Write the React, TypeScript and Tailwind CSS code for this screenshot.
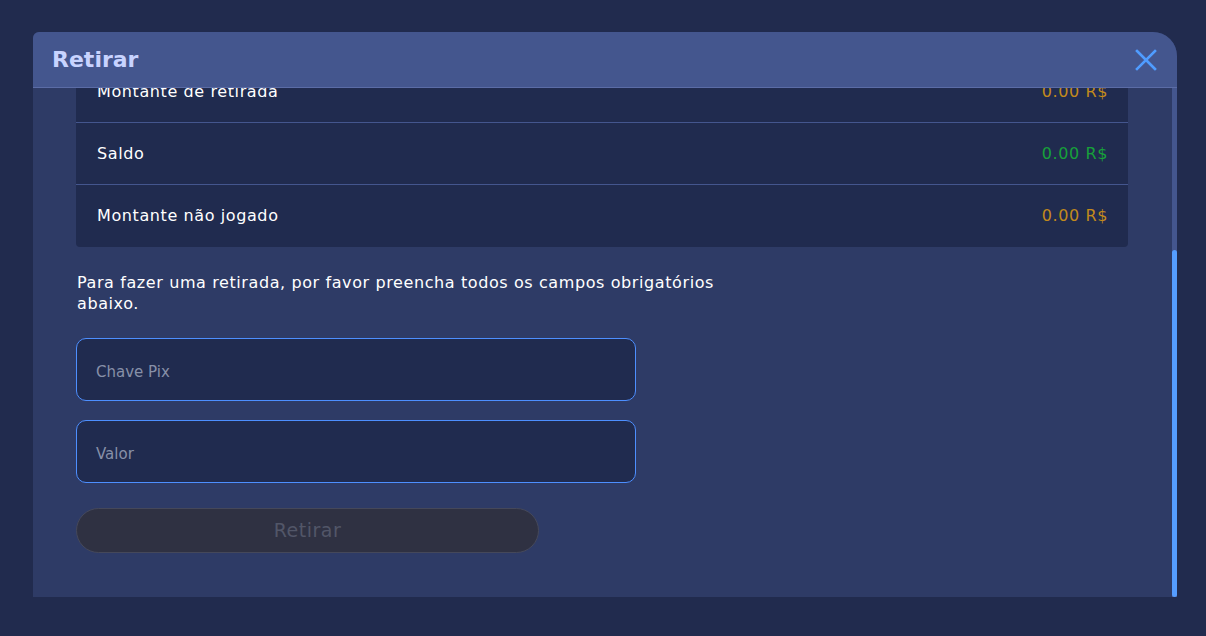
import React from "react";

const font = { fontFamily: '"DejaVu Sans", "Noto Sans", sans-serif' };

function Row({ label, value, color, last }: { label: string; value: string; color: string; last?: boolean }) {
  return (
    <div className={`flex h-[62px] items-center justify-between px-[20px] tracking-[0.6px] ${last ? "" : "border-b border-[#44568e]"}`}>
      <span className="pl-[1px] text-[16px] text-white">{label}</span>
      <span className={`text-[16px] ${color}`}>{value}</span>
    </div>
  );
}

export default function App() {
  return (
    <div className="flex h-[636px] w-[1206px] bg-[#212b4e] pl-[33px] pr-[29px] pt-[32px] pb-[39px]" style={font}>
      <div className="flex flex-1 flex-col overflow-hidden rounded-tl-[6px] rounded-tr-[24px] bg-[#2e3b66]">
        <div className="flex h-[56px] shrink-0 items-center justify-between border-b border-[#5b6ca6] bg-[#44568e] pl-[19px] pr-[20px]">
          <span className="text-[22px] font-bold text-[#c8d3ff]">Retirar</span>
          <svg width="22" height="22" viewBox="0 0 22 22" fill="none" stroke="#4f9cff" strokeWidth="2.6" strokeLinecap="square">
            <path d="M2 2L20 20M20 2L2 20" />
          </svg>
        </div>
        <div className="flex min-h-0 flex-1">
          <div className="min-w-0 flex-1 overflow-hidden pl-[43px] pr-[44px]">
            <div className="-mt-[27px] overflow-hidden rounded-[4px] bg-[#202b4f]">
              <Row label="Montante de retirada" value="0.00 R$" color="text-[#c28a1c]" />
              <Row label="Saldo" value="0.00 R$" color="text-[#17a03a]" />
              <Row label="Montante não jogado" value="0.00 R$" color="text-[#c28a1c]" last />
            </div>
            <p className="mt-[25px] max-w-[660px] pl-[1px] text-[16px] leading-[21px] tracking-[0.6px] text-white">
              Para fazer uma retirada, por favor preencha todos os campos obrigatórios abaixo.
            </p>
            <div className="mt-[24px] flex w-[560px] flex-col gap-[19px]">
              <div className="flex h-[63px] items-center rounded-[10px] border border-[#4d8fff] bg-[#202b4f] px-[19px] pt-[6px]">
                <span className="text-[15px] text-[#8790a8]">Chave Pix</span>
              </div>
              <div className="flex h-[63px] items-center rounded-[10px] border border-[#4d8fff] bg-[#202b4f] px-[19px] pt-[6px]">
                <span className="text-[15px] text-[#8790a8]">Valor</span>
              </div>
            </div>
            <div className="mt-[25px] flex h-[45px] w-[463px] items-center justify-center rounded-full border border-[#45485a] bg-[#2f3142]">
              <span className="text-[19px] tracking-[0.5px] text-[#525668]">Retirar</span>
            </div>
          </div>
          <div className="flex w-[5px] flex-col bg-[#44568e]">
            <div className="h-[162px]" />
            <div className="flex-1 rounded-full bg-[#559dff]" />
          </div>
        </div>
      </div>
    </div>
  );
}
